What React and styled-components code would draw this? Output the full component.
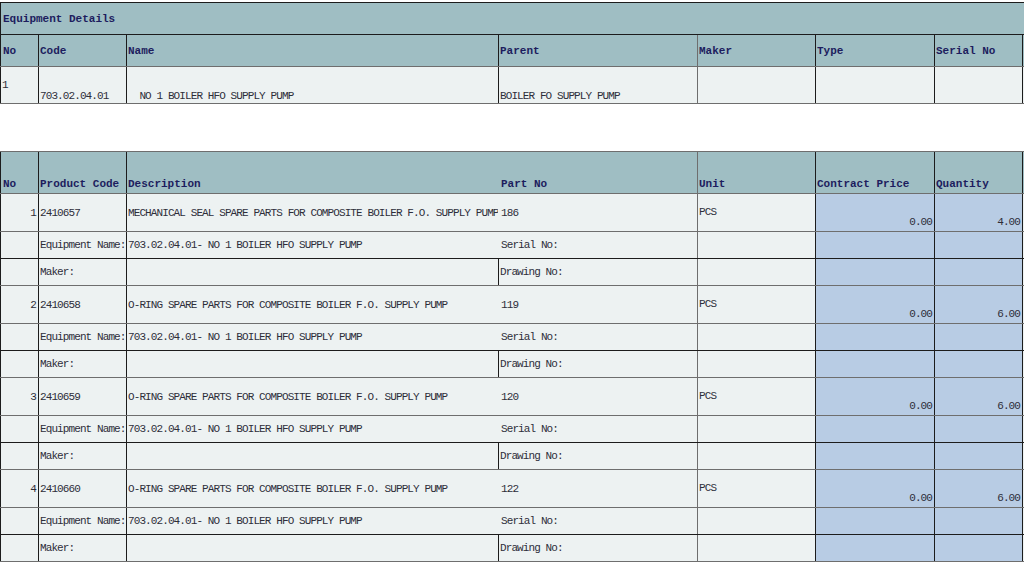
import React from 'react';
import styled, { createGlobalStyle } from 'styled-components';

const HEAD_BG = '#9fbec3';
const BODY_BG = '#edf2f2';
const BLUE = '#b8cce4';
const BLACK = '#1c1c1c';
const GRAY = '#6e6e6e';
const COLS = '38px 88px 372px 199px 118px 119px 88px 1fr';

const Global = createGlobalStyle`
  html, body { margin: 0; padding: 0; background: #ffffff; overflow: hidden; }
  #root { width: 1040px; }
`;

const Page = styled.div`
  display: flex;
  flex-direction: column;
  padding-top: 2px;
  gap: 47px;
  width: 1040px;
`;

const Grid = styled.section`
  display: flex;
  flex-direction: column;
  border-bottom: 1px solid ${GRAY};
`;

const Row = styled.div`
  display: grid;
  grid-template-columns: ${COLS};
  box-sizing: border-box;
  height: ${(p) => p.$h}px;
  border-top: 1px solid ${(p) => p.$top};
`;

const Cell = styled.div`
  box-sizing: border-box;
  grid-column: span ${(p) => p.$span || 1};
  border-left: 1px solid ${(p) => p.$lead || 'transparent'};
  background: ${(p) => p.$bg || BODY_BG};
  display: flex;
  align-items: ${(p) => p.$v || 'center'};
  justify-content: ${(p) => (p.$right ? 'flex-end' : 'flex-start')};
  padding: ${(p) => p.$pt || 0}px ${(p) => (p.$right ? 2 : 0)}px ${(p) => p.$pb || 0}px ${(p) => p.$pl ?? 1}px;
  white-space: pre;
  font-family: "Liberation Mono", "Noto Sans CJK SC", monospace;
  font-size: 11px;
  line-height: 12px;
  letter-spacing: -0.9px;
  color: #2e2e3a;
`;

const Head = styled(Cell)`
  background: ${HEAD_BG};
  font-weight: bold;
  letter-spacing: 0;
  color: #1d1d5e;
`;

const items = [
  { no: 1, code: '2410657', desc: 'MECHANICAL SEAL SPARE PARTS FOR COMPOSITE BOILER F.O. SUPPLY PUMP', part: '186', qty: '4.00' },
  { no: 2, code: '2410658', desc: 'O-RING SPARE PARTS FOR COMPOSITE BOILER F.O. SUPPLY PUMP', part: '119', qty: '6.00' },
  { no: 3, code: '2410659', desc: 'O-RING SPARE PARTS FOR COMPOSITE BOILER F.O. SUPPLY PUMP', part: '120', qty: '6.00' },
  { no: 4, code: '2410660', desc: 'O-RING SPARE PARTS FOR COMPOSITE BOILER F.O. SUPPLY PUMP', part: '122', qty: '6.00' },
];

function EquipmentDetails() {
  return (
    <Grid>
      <Row $h={32} $top={BLACK}>
        <Head $span={8} $lead={BLACK} $pl={2}>Equipment Details</Head>
      </Row>
      <Row $h={32} $top={BLACK}>
        <Head $lead={BLACK} $pl={2}>No</Head>
        <Head $lead={BLACK}>Code</Head>
        <Head $lead={BLACK}>Name</Head>
        <Head $lead={BLACK}>Parent</Head>
        <Head $lead={GRAY}>Maker</Head>
        <Head $lead={BLACK}>Type</Head>
        <Head $lead={BLACK}>Serial No</Head>
        <Head $lead={BLACK} />
      </Row>
      <Row $h={37} $top={GRAY}>
        <Cell $lead={BLACK}>1</Cell>
        <Cell $lead={BLACK} $v="flex-end" $pb={1}>703.02.04.01</Cell>
        <Cell $lead={BLACK} $v="flex-end" $pb={1}>{'  NO 1 BOILER HFO SUPPLY PUMP'}</Cell>
        <Cell $lead={BLACK} $v="flex-end" $pb={1}>BOILER FO SUPPLY PUMP</Cell>
        <Cell $lead={GRAY} />
        <Cell $lead={BLACK} />
        <Cell $lead={BLACK} />
        <Cell $lead={BLACK} />
      </Row>
    </Grid>
  );
}

function ItemRows({ item }) {
  return (
    <>
      <Row $h={38} $top={GRAY}>
        <Cell $lead={BLACK} $right>{item.no}</Cell>
        <Cell $lead={BLACK}>{item.code}</Cell>
        <Cell $lead={BLACK}>{item.desc}</Cell>
        <Cell $pl={2}>{item.part}</Cell>
        <Cell $lead={GRAY} $v="flex-start" $pt={12}>PCS</Cell>
        <Cell $lead={BLACK} $bg={BLUE} $v="flex-end" $right $pb={3}>0.00</Cell>
        <Cell $lead={BLACK} $bg={BLUE} $v="flex-end" $right $pb={3}>{item.qty}</Cell>
        <Cell $lead={BLACK} />
      </Row>
      <Row $h={27} $top={GRAY}>
        <Cell $lead={BLACK} />
        <Cell $lead={BLACK}>Equipment Name:</Cell>
        <Cell $lead={BLACK}>703.02.04.01- NO 1 BOILER HFO SUPPLY PUMP</Cell>
        <Cell $pl={2}>Serial No:</Cell>
        <Cell $lead={GRAY} />
        <Cell $lead={BLACK} $bg={BLUE} />
        <Cell $lead={BLACK} $bg={BLUE} />
        <Cell $lead={BLACK} />
      </Row>
      <Row $h={27} $top={BLACK}>
        <Cell $lead={BLACK} />
        <Cell $lead={BLACK}>Maker:</Cell>
        <Cell $lead={BLACK} />
        <Cell $lead={BLACK}>Drawing No:</Cell>
        <Cell $lead={GRAY} />
        <Cell $lead={BLACK} $bg={BLUE} />
        <Cell $lead={BLACK} $bg={BLUE} />
        <Cell $lead={BLACK} />
      </Row>
    </>
  );
}

function ItemsTable() {
  return (
    <Grid>
      <Row $h={42} $top={GRAY}>
        <Head $lead={BLACK} $v="flex-end" $pb={3} $pl={2}>No</Head>
        <Head $lead={BLACK} $v="flex-end" $pb={3}>Product Code</Head>
        <Head $lead={BLACK} $v="flex-end" $pb={3}>Description</Head>
        <Head $v="flex-end" $pb={3} $pl={2}>Part No</Head>
        <Head $lead={GRAY} $v="flex-end" $pb={3}>Unit</Head>
        <Head $lead={BLACK} $v="flex-end" $pb={3}>Contract Price</Head>
        <Head $lead={BLACK} $v="flex-end" $pb={3}>Quantity</Head>
        <Head $lead={BLACK} />
      </Row>
      {items.map((it) => (
        <ItemRows key={it.no} item={it} />
      ))}
    </Grid>
  );
}

export default function App() {
  return (
    <>
      <Global />
      <Page>
        <EquipmentDetails />
        <ItemsTable />
      </Page>
    </>
  );
}
